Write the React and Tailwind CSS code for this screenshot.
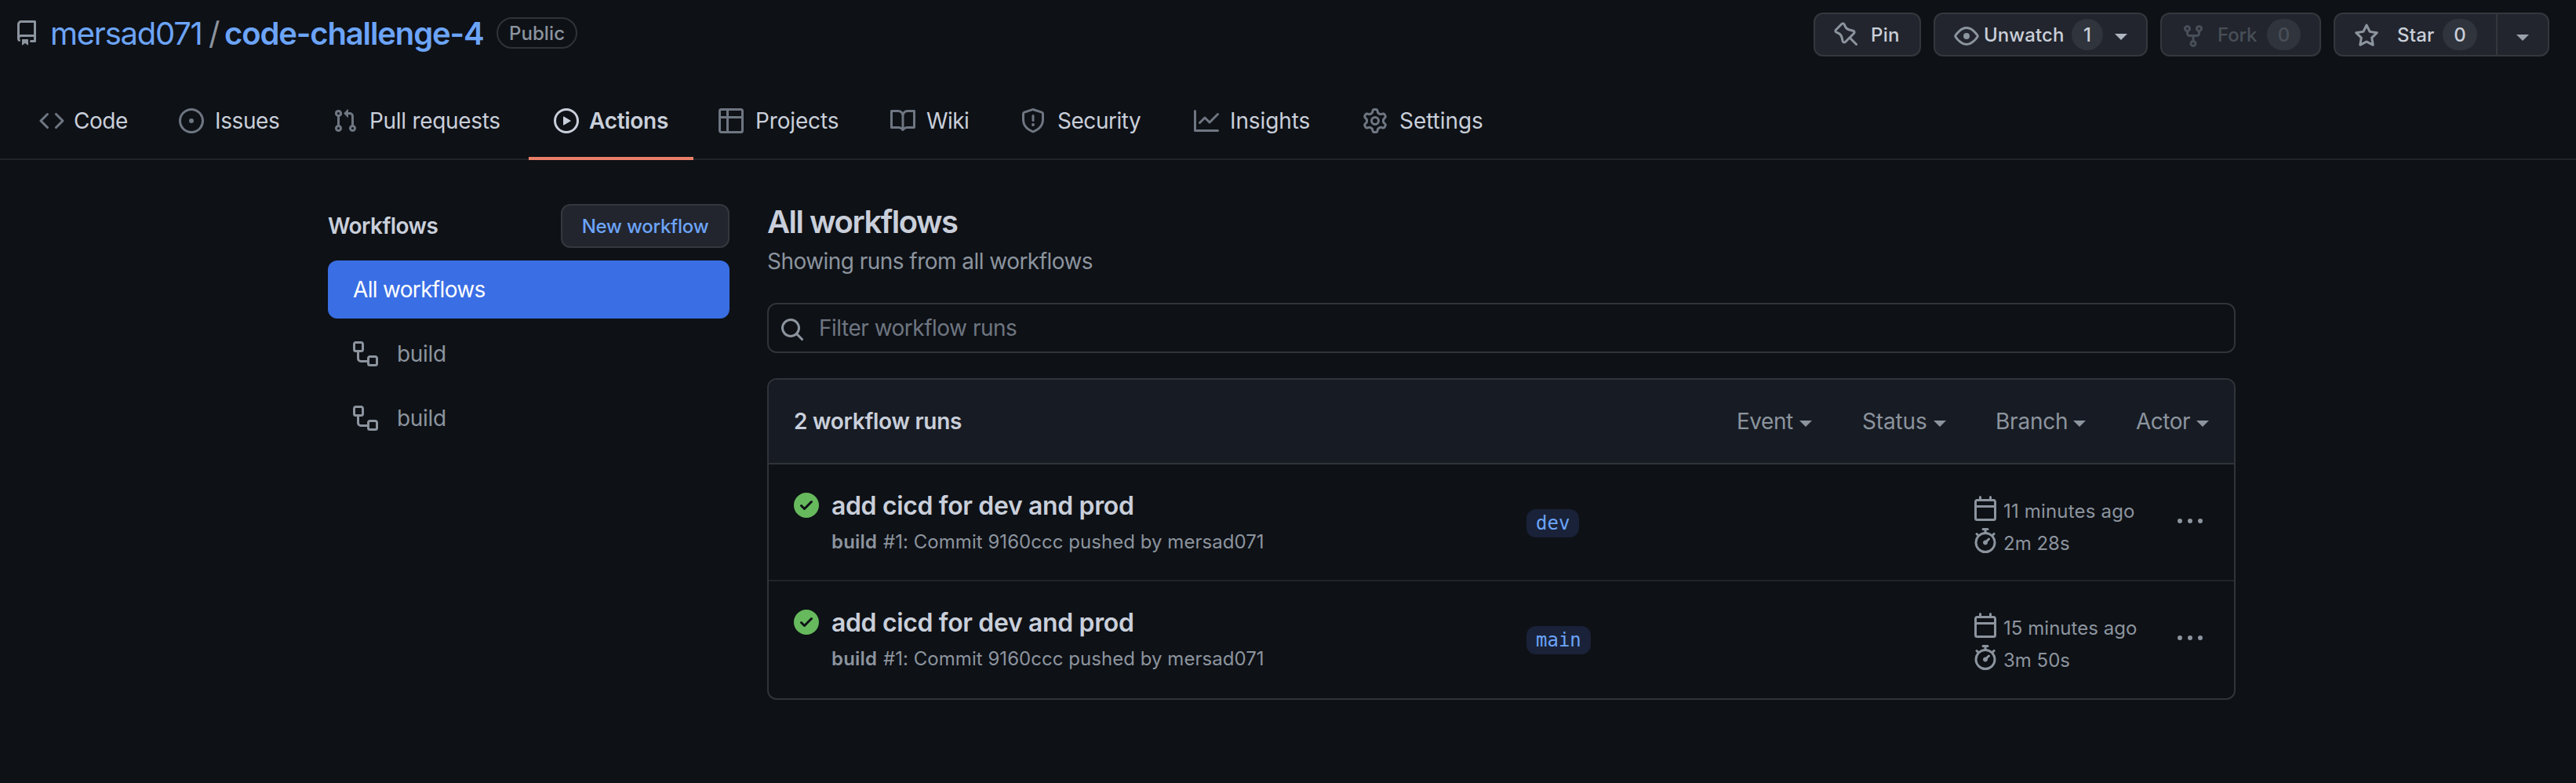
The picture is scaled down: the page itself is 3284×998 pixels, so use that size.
import React from "react";

const ICONS = {
  repo: "M2 2.5A2.5 2.5 0 014.5 0h8.75a.75.75 0 01.75.75v12.5a.75.75 0 01-.75.75h-2.5a.75.75 0 110-1.5h1.75v-2h-8a1 1 0 00-.714 1.7.75.75 0 01-1.072 1.05A2.495 2.495 0 012 11.5v-9zm10.5-1V9h-8c-.356 0-.694.074-1 .208V2.5a1 1 0 011-1h8zM5 12.25v3.25a.25.25 0 00.4.2l1.45-1.087a.25.25 0 01.3 0L8.6 15.7a.25.25 0 00.4-.2v-3.25a.25.25 0 00-.25-.25h-3.5a.25.25 0 00-.25.25z",
  code: "M4.72 3.22a.75.75 0 011.06 1.06L2.06 8l3.72 3.72a.75.75 0 11-1.06 1.06L.47 8.53a.75.75 0 010-1.06l4.25-4.25zm6.56 0a.75.75 0 10-1.06 1.06L13.94 8l-3.72 3.72a.75.75 0 101.06 1.06l4.25-4.25a.75.75 0 000-1.06l-4.25-4.25z",
  issue: "M8 9.5a1.5 1.5 0 100-3 1.5 1.5 0 000 3zM8 0a8 8 0 100 16A8 8 0 008 0zM1.5 8a6.5 6.5 0 1113 0 6.5 6.5 0 01-13 0z",
  pull: "M7.177 3.073L9.573.677A.25.25 0 0110 .854v4.792a.25.25 0 01-.427.177L7.177 3.427a.25.25 0 010-.354zM3.75 2.5a.75.75 0 100 1.5.75.75 0 000-1.5zm-2.25.75a2.25 2.25 0 113 2.122v5.256a2.251 2.251 0 11-1.5 0V5.372A2.25 2.25 0 011.5 3.25zM11 2.5h-1V4h1a1 1 0 011 1v5.628a2.251 2.251 0 101.5 0V5A2.5 2.5 0 0011 2.5zm1 10.25a.75.75 0 111.5 0 .75.75 0 01-1.5 0zM3.75 12a.75.75 0 100 1.5.75.75 0 000-1.5z",
  play: "M1.5 8a6.5 6.5 0 1113 0 6.5 6.5 0 01-13 0zM8 0a8 8 0 100 16A8 8 0 008 0zM6.379 5.227A.25.25 0 006 5.442v5.117a.25.25 0 00.379.214l4.264-2.559a.25.25 0 000-.428L6.379 5.227z",
  table: "M1.75 0A1.75 1.75 0 000 1.75v12.5C0 15.216.784 16 1.75 16h12.5A1.75 1.75 0 0016 14.25V1.75A1.75 1.75 0 0014.25 0H1.75zM1.5 1.75a.25.25 0 01.25-.25H5V5H1.5V1.75zM6.5 1.5V5h8V1.75a.25.25 0 00-.25-.25H6.5zm8 5h-8v8h7.75a.25.25 0 00.25-.25V6.5zM5 14.5v-8H1.5v7.75c0 .138.112.25.25.25H5z",
  book: "M0 1.75A.75.75 0 01.75 1h4.253c1.227 0 2.317.59 3 1.501A3.744 3.744 0 0111.006 1h4.245a.75.75 0 01.75.75v10.5a.75.75 0 01-.75.75h-4.507a2.25 2.25 0 00-1.591.659l-.622.621a.75.75 0 01-1.06 0l-.622-.621A2.25 2.25 0 005.258 13H.75a.75.75 0 01-.75-.75V1.75zm8.755 3a2.25 2.25 0 012.25-2.25H14.5v9h-3.757c-.71 0-1.4.201-1.992.572l.004-7.322zm-1.504 7.324l.004-5.073-.002-2.253A2.25 2.25 0 005.003 2.5H1.5v9h3.757a3.75 3.75 0 011.994.574z",
  shield: "M7.467.133a1.75 1.75 0 011.066 0l5.25 1.68A1.75 1.75 0 0115 3.48V7c0 1.566-.32 3.182-1.303 4.682-.983 1.498-2.585 2.813-5.032 3.855a1.7 1.7 0 01-1.33 0c-2.447-1.042-4.049-2.357-5.032-3.855C1.32 10.182 1 8.566 1 7V3.48a1.75 1.75 0 011.217-1.667l5.25-1.68zm.61 1.429a.25.25 0 00-.153 0l-5.25 1.68a.25.25 0 00-.174.238V7c0 1.358.275 2.666 1.057 3.86.784 1.194 2.121 2.34 4.366 3.297a.2.2 0 00.154 0c2.245-.956 3.582-2.104 4.366-3.298C13.225 9.666 13.5 8.36 13.5 7V3.48a.25.25 0 00-.174-.237l-5.25-1.68zM8.75 4.75a.75.75 0 00-1.5 0v3a.75.75 0 001.5 0v-3zM9 10.5a1 1 0 11-2 0 1 1 0 012 0z",
  graph: "M1.5 1.75a.75.75 0 00-1.5 0v12.5c0 .414.336.75.75.75h14.5a.75.75 0 000-1.5H1.5V1.75zm14.28 2.53a.75.75 0 00-1.06-1.06L10 7.94 7.53 5.47a.75.75 0 00-1.06 0L3.22 8.72a.75.75 0 001.06 1.06L7 7.06l2.47 2.47a.75.75 0 001.06 0l5.25-5.25z",
  gear: "M7.429 1.525a6.593 6.593 0 011.142 0c.036.003.108.036.137.146l.289 1.105c.147.56.55.967.997 1.189.174.086.341.183.501.29.417.278.97.423 1.53.27l1.102-.303c.11-.03.175.016.195.046.219.31.41.641.573.989.014.031.022.11-.059.19l-.815.806c-.411.406-.562.957-.53 1.456a4.588 4.588 0 010 .582c-.032.499.119 1.05.53 1.456l.815.806c.08.08.073.159.059.19a6.494 6.494 0 01-.573.99c-.02.029-.086.074-.195.045l-1.103-.303c-.559-.153-1.112-.008-1.529.27-.16.107-.327.204-.5.29-.449.222-.851.628-.998 1.189l-.289 1.105c-.029.11-.101.143-.137.146a6.613 6.613 0 01-1.142 0c-.036-.003-.108-.037-.137-.146l-.289-1.105c-.147-.56-.55-.967-.997-1.189a4.502 4.502 0 01-.501-.29c-.417-.278-.97-.423-1.53-.27l-1.102.303c-.11.03-.175-.016-.195-.046a6.492 6.492 0 01-.573-.989c-.014-.031-.022-.11.059-.19l.815-.806c.411-.406.562-.957.53-1.456a4.587 4.587 0 010-.582c.032-.499-.119-1.05-.53-1.456l-.815-.806c-.08-.08-.073-.159-.059-.19a6.44 6.44 0 01.573-.99c.02-.029.086-.075.195-.045l1.103.303c.559.153 1.112.008 1.529-.27.16-.107.327-.204.5-.29.449-.222.851-.628.998-1.189l.289-1.105c.029-.11.101-.143.137-.146zM8 0c-.236 0-.47.01-.701.03-.743.065-1.29.615-1.458 1.261l-.29 1.106c-.017.066-.078.158-.211.224a5.994 5.994 0 00-.668.386c-.123.082-.233.09-.3.071L3.27 2.776c-.644-.177-1.392.02-1.82.63a7.977 7.977 0 00-.704 1.217c-.315.675-.111 1.422.363 1.891l.815.806c.05.048.098.147.088.294a6.084 6.084 0 000 .772c.01.147-.038.246-.088.294l-.815.806c-.474.469-.678 1.216-.363 1.891.2.428.436.835.704 1.218.428.609 1.176.806 1.82.63l1.103-.303c.066-.019.176-.011.299.071.213.143.436.272.668.386.133.066.194.158.212.224l.289 1.106c.169.646.715 1.196 1.458 1.26a8.094 8.094 0 001.402 0c.743-.064 1.29-.614 1.458-1.26l.29-1.106c.017-.066.078-.158.211-.224a5.98 5.98 0 00.668-.386c.123-.082.233-.09.3-.071l1.102.302c.644.177 1.392-.02 1.82-.63.268-.382.505-.789.704-1.217.315-.675.111-1.422-.364-1.891l-.814-.806c-.05-.048-.098-.147-.088-.294a6.1 6.1 0 000-.772c-.01-.147.039-.246.088-.294l.814-.806c.475-.469.679-1.216.364-1.891a7.992 7.992 0 00-.704-1.218c-.428-.609-1.176-.806-1.82-.63l-1.103.303c-.066.019-.176.011-.299-.071a5.991 5.991 0 00-.668-.386c-.133-.066-.194-.158-.212-.224L10.16 1.29C9.99.645 9.444.095 8.701.031A8.094 8.094 0 008 0zm1.5 8a1.5 1.5 0 11-3 0 1.5 1.5 0 013 0zM11 8a3 3 0 11-6 0 3 3 0 016 0z",
  pin: "M4.456.734a1.75 1.75 0 012.826.504l.613 1.327a3.081 3.081 0 002.084 1.707l2.454.584c1.332.317 1.8 1.972.832 2.94L11.06 10l3.72 3.72a.75.75 0 11-1.061 1.06L10 11.06l-2.204 2.205c-.968.968-2.623.5-2.94-.832l-.584-2.454a3.081 3.081 0 00-1.707-2.084l-1.327-.613a1.75 1.75 0 01-.504-2.826L4.456.734zM5.92 1.866a.25.25 0 00-.404-.072L1.794 5.516a.25.25 0 00.072.404l1.328.613A4.582 4.582 0 015.73 9.63l.584 2.454a.25.25 0 00.42.12l5.47-5.47a.25.25 0 00-.12-.42L9.63 5.73a4.581 4.581 0 01-3.098-2.537L5.92 1.866z",
  eye: "M1.679 7.932c.412-.621 1.242-1.75 2.366-2.717C5.175 4.242 6.527 3.5 8 3.5c1.473 0 2.824.742 3.955 1.715 1.124.967 1.954 2.096 2.366 2.717a.119.119 0 010 .136c-.412.621-1.242 1.75-2.366 2.717C10.825 11.758 9.473 12.5 8 12.5c-1.473 0-2.824-.742-3.955-1.715C2.92 9.818 2.09 8.69 1.679 8.068a.119.119 0 010-.136zM8 2c-1.981 0-3.67.992-4.933 2.078C1.797 5.169.88 6.423.43 7.1a1.619 1.619 0 000 1.798c.45.678 1.367 1.932 2.637 3.024C4.329 13.008 6.019 14 8 14c1.981 0 3.67-.992 4.933-2.078 1.27-1.091 2.187-2.345 2.637-3.023a1.619 1.619 0 000-1.798c-.45-.678-1.367-1.932-2.637-3.023C11.671 2.992 9.981 2 8 2zm0 8a2 2 0 100-4 2 2 0 000 4z",
  fork: "M5 3.25a.75.75 0 11-1.5 0 .75.75 0 011.5 0zm0 2.122a2.25 2.25 0 10-1.5 0v.878A2.25 2.25 0 005.75 8.5h1.5v2.128a2.251 2.251 0 101.5 0V8.5h1.5a2.25 2.25 0 002.25-2.25v-.878a2.25 2.25 0 10-1.5 0v.878a.75.75 0 01-.75.75h-4.5A.75.75 0 015 6.25v-.878zm3.75 7.378a.75.75 0 11-1.5 0 .75.75 0 011.5 0zm3-8.75a.75.75 0 100-1.5.75.75 0 000 1.5z",
  star: "M8 .25a.75.75 0 01.673.418l1.882 3.815 4.21.612a.75.75 0 01.416 1.279l-3.046 2.97.719 4.192a.75.75 0 01-1.088.791L8 12.347l-3.766 1.98a.75.75 0 01-1.088-.79l.72-4.194L.818 6.374a.75.75 0 01.416-1.28l4.21-.611L7.327.668A.75.75 0 018 .25zm0 2.445L6.615 5.5a.75.75 0 01-.564.41l-3.097.45 2.24 2.184a.75.75 0 01.216.664l-.528 3.084 2.769-1.456a.75.75 0 01.698 0l2.77 1.456-.53-3.084a.75.75 0 01.216-.664l2.24-2.183-3.096-.45a.75.75 0 01-.564-.41L8 2.694v.001z",
  workflow: "M0 1.75C0 .784.784 0 1.75 0h3.5C6.216 0 7 .784 7 1.75v3.5A1.75 1.75 0 015.25 7H4v4a1 1 0 001 1h4v-1.25C9 9.784 9.784 9 10.75 9h3.5c.966 0 1.75.784 1.75 1.75v3.5A1.75 1.75 0 0114.25 16h-3.5A1.75 1.75 0 019 14.25v-.75H5A2.5 2.5 0 012.5 11V7h-.75A1.75 1.75 0 010 5.25v-3.5zm1.75-.25a.25.25 0 00-.25.25v3.5c0 .138.112.25.25.25h3.5a.25.25 0 00.25-.25v-3.5a.25.25 0 00-.25-.25h-3.5zm9 9a.25.25 0 00-.25.25v3.5c0 .138.112.25.25.25h3.5a.25.25 0 00.25-.25v-3.5a.25.25 0 00-.25-.25h-3.5z",
  search: "M11.5 7a4.499 4.499 0 11-8.998 0A4.499 4.499 0 0111.5 7zm-.82 4.74a6 6 0 111.06-1.06l3.04 3.04a.75.75 0 11-1.06 1.06l-3.04-3.04z",
  check: "M8 16A8 8 0 108 0a8 8 0 000 16zm3.78-9.72a.75.75 0 00-1.06-1.06L6.75 9.19 5.28 7.72a.75.75 0 00-1.06 1.06l2 2a.75.75 0 001.06 0l4.5-4.5z",
  calendar: "M4.75 0a.75.75 0 01.75.75V2h5V.75a.75.75 0 011.5 0V2h1.25c.966 0 1.75.784 1.75 1.75v10.5A1.75 1.75 0 0113.25 16H2.75A1.75 1.75 0 011 14.25V3.75C1 2.784 1.784 2 2.75 2H4V.75A.75.75 0 014.75 0zm0 3.5h8.5a.25.25 0 01.25.25V6h-11V3.75a.25.25 0 01.25-.25h2zm-2.25 4v6.75c0 .138.112.25.25.25h10.5a.25.25 0 00.25-.25V7.5h-11z",
  stopwatch: "M5.75.75A.75.75 0 016.5 0h3a.75.75 0 010 1.5h-.75v1l-.001.041a6.718 6.718 0 013.464 1.435l.007-.006.75-.75a.75.75 0 111.06 1.06l-.75.75-.006.007a6.75 6.75 0 11-10.548 0L2.72 5.03l-.75-.75a.75.75 0 011.06-1.06l.75.75.007.006A6.718 6.718 0 017.25 2.541a.756.756 0 010-.041v-1H6.5a.75.75 0 01-.75-.75zM8 14.5A5.25 5.25 0 108 4a5.25 5.25 0 000 10.5zm.389-6.7l1.33-1.33a.75.75 0 111.061 1.06L9.45 8.861A1.502 1.502 0 018 10.75a1.5 1.5 0 11.389-2.95z",
  kebab: "M0 8a1.5 1.5 0 103 0 1.5 1.5 0 00-3 0zM6.5 8a1.5 1.5 0 103 0 1.5 1.5 0 00-3 0zM13 8a1.5 1.5 0 103 0 1.5 1.5 0 00-3 0z",
};

function Icon({ name, className = "" }) {
  return (
    <svg viewBox="0 0 16 16" fill="currentColor" fillRule="evenodd" className={`size-8 shrink-0 ${className}`}>
      <path d={ICONS[name]} />
    </svg>
  );
}

function Caret({ className = "" }) {
  return (
    <svg viewBox="0 0 16 8" fill="currentColor" className={`h-2 w-4 shrink-0 ${className}`}>
      <path d="M0 0h16L8 8z" />
    </svg>
  );
}

const TABS = [
  { icon: "code", label: "Code", box: "w-[178px] gap-3", text: "tracking-[-0.46px]" },
  { icon: "issue", label: "Issues", box: "w-[196px] gap-[14px]", text: "tracking-[-0.39px]" },
  { icon: "pull", label: "Pull requests", box: "w-[282px] gap-[15px]", text: "tracking-[-0.3px]" },
  { icon: "play", label: "Actions", box: "w-[210px] gap-[13px]", text: "tracking-[-0.28px]", active: true },
  { icon: "table", label: "Projects", box: "w-[219px] gap-[15px]", text: "tracking-[-0.15px]" },
  { icon: "book", label: "Wiki", box: "w-[166px] gap-[14px]", text: "tracking-[-0.58px]" },
  { icon: "shield", label: "Security", box: "w-[221px] gap-[15px]", text: "tracking-[-0.47px]" },
  { icon: "graph", label: "Insights", box: "w-[215px] gap-[14px]", text: "tracking-[-0.1px]" },
  { icon: "gear", label: "Settings", box: "gap-[15px]", text: "tracking-[-0.06px]" },
];

const FILTERS = [
  { label: "Event", box: "w-[161px] gap-[8px]", text: "pl-px tracking-[-0.47px]" },
  { label: "Status", box: "w-[169px] gap-[8px]", text: "tracking-[-0.14px]" },
  { label: "Branch", box: "w-[180px] gap-[7px]", text: "pl-px tracking-[-0.22px]" },
  { label: "Actor", box: "gap-2", text: "tracking-[-0.5px]" },
];

const RUNS = [
  { branch: "dev", when: "11 minutes ago", whenText: "tracking-[0.18px]", took: "2m 28s" },
  { branch: "main", when: "15 minutes ago", whenText: "tracking-[0.04px]", took: "3m 50s" },
];

const BUTTON = "flex h-14 items-center rounded-xl border-2 border-[#34383d] bg-[#22252d] text-2xl font-medium text-[#c9cfda]";
const COUNTER = "flex h-10 items-center justify-center rounded-full bg-[#30343c] pt-px";

function Header() {
  return (
    <header className="flex h-[84px] items-center pl-[18px] pr-[34px]">
      <Icon name="repo" className="text-[#8c949e]" />
      <div className="ml-[14px] flex pt-0.5 text-[40px] leading-[48px] text-[#6ca4f8]">
        <span className="w-[202px] tracking-[-1.25px]">mersad071</span>
        <span className="w-[20px] text-[#8c949e]">/</span>
        <span className="w-[331px] font-semibold tracking-[-1.13px]">code-challenge-4</span>
      </div>
      <span className="ml-4 flex h-10 w-[103px] items-center justify-center rounded-full border-2 border-[#303439] pt-px text-2xl font-medium tracking-[0.1px] text-[#8c949e]">
        Public
      </span>
      <div className="ml-auto flex gap-4 pt-1">
        <button className={`${BUTTON} w-[137px] pl-6`}>
          <Icon name="pin" className="text-[#8c949e]" />
          <span className="ml-[15px] pt-px tracking-[0.3px]">Pin</span>
        </button>
        <button className={`${BUTTON} w-[273px] pl-6`}>
          <Icon name="eye" className="mt-1 text-[#8c949e]" />
          <span className="ml-[6px] w-[112px] pt-px text-left tracking-[0.08px]">Unwatch</span>
          <span className={`${COUNTER} w-10`}>1</span>
          <Caret className="ml-[15px] mt-[6px] text-[#b0b6c0]" />
        </button>
        <button className={`${BUTTON} w-[205px] pl-6`}>
          <Icon name="fork" className="mt-1 text-[#484f58]" />
          <span className="ml-[15px] w-[63px] pt-px text-left text-[#484f58] tracking-[-0.14px]">Fork</span>
          <span className={`${COUNTER} w-[43px] text-[#484f58]`}>0</span>
        </button>
        <div className={`${BUTTON} w-[275px]`}>
          <button className="flex h-full w-[207px] items-center border-r-2 border-[#34383d] pl-6">
            <Icon name="star" className="mt-1 text-[#8c949e]" />
            <span className="ml-[23px] w-[58px] pt-px text-left tracking-[0.19px]">Star</span>
            <span className={`${COUNTER} w-[44px]`}>0</span>
          </button>
          <button className="flex flex-1 items-center justify-center">
            <Caret className="mt-2 text-[#9aa1ab]" />
          </button>
        </div>
      </div>
    </header>
  );
}

function Tabs() {
  return (
    <nav className="flex h-[120px] items-end border-b-2 border-[#22262b] pl-[18px]">
      {TABS.map((t) => (
        <a
          key={t.label}
          className={`-mb-0.5 flex h-[100px] items-center border-b-4 pl-8 pt-1 text-[28px] text-[#c9cfda] ${t.box} ${
            t.active ? "border-[#ea8069] font-semibold" : "border-transparent"
          }`}
        >
          <Icon name={t.icon} className={t.active ? "text-[#c9cfda]" : "text-[#6e7681]"} />
          <span className={`whitespace-nowrap ${t.text}`}>{t.label}</span>
        </a>
      ))}
    </nav>
  );
}

function Sidebar() {
  return (
    <aside className="w-[512px] pt-2">
      <div className="flex h-14 items-center justify-between">
        <h3 className="text-[28px] font-semibold tracking-[-0.57px] text-[#c9cfda]">Workflows</h3>
        <button className="flex h-14 w-[215px] items-center justify-center rounded-xl border-2 border-[#34383d] bg-[#22252d] pt-px text-2xl font-medium tracking-[-0.22px] text-[#6ca4f8]">
          New workflow
        </button>
      </div>
      <ul className="mt-4 flex flex-col gap-2 text-[28px] text-[#8c949e]">
        <li className="flex h-[74px] items-center rounded-xl bg-[#396ee5] pl-8 tracking-[-0.68px] text-white">All workflows</li>
        {[1, 2].map((n) => (
          <li key={n} className="flex h-[74px] items-center gap-6 pl-8 tracking-[-0.3px]">
            <Icon name="workflow" />
            build
          </li>
        ))}
      </ul>
    </aside>
  );
}

function Run({ run, last }) {
  return (
    <div className={`flex h-[149px] border-b-2 ${last ? "border-transparent" : "border-[#212529]"}`}>
      <div className="flex w-[966px] gap-4 pl-8 pt-7">
        <Icon name="check" className="mt-2 text-[#66b95d]" />
        <div className="whitespace-nowrap pt-px">
          <div className="text-[32px] font-semibold leading-[48px] tracking-[-0.36px] text-[#c9cfda]">add cicd for dev and prod</div>
          <div className="mt-1 flex text-2xl leading-9 text-[#8c949e]">
            <span className="w-[66px] font-semibold tracking-[0.19px]">build</span>
            <span className="tracking-[0.04px]">#1: Commit 9160ccc pushed by mersad071</span>
          </div>
        </div>
      </div>
      <div className="w-[569px] pt-[57px]">
        <span className="inline-flex h-9 items-center rounded-xl bg-[#192238] px-3 font-['DejaVu_Sans_Mono',monospace] text-2xl text-[#6ca4f8]">
          {run.branch}
        </span>
      </div>
      <div className="w-[261px] pt-[37px] text-2xl text-[#8c949e]">
        <div className="flex h-[41px] items-center gap-[7px]">
          <Icon name="calendar" className="-mt-1" />
          <span className={`mt-1 ${run.whenText}`}>{run.when}</span>
        </div>
        <div className="flex h-[41px] items-center gap-[7px]">
          <Icon name="stopwatch" className="-mt-1" />
          <span className="mt-1">{run.took}</span>
        </div>
      </div>
      <div className="pt-14">
        <Icon name="kebab" className="text-[#8c949e]" />
      </div>
    </div>
  );
}

function Runs() {
  return (
    <main className="w-[1872px]">
      <h2 className="h-[60px] pt-px text-[40px] font-semibold leading-[60px] tracking-[-1.5px] text-[#c9cfda]">All workflows</h2>
      <p className="text-[28px] leading-[42px] tracking-[-0.54px] text-[#8c949e]">Showing runs from all workflows</p>
      <div className="mt-8 flex h-16 items-center gap-[18px] rounded-xl border-2 border-[#303439] pl-[14px] text-[28px]">
        <Icon name="search" className="mt-1 text-[#8c949e]" />
        <span className="tracking-[-0.5px] text-[#6e7681]">Filter workflow runs</span>
      </div>
      <section className="mt-8 overflow-hidden rounded-xl border-2 border-[#303439]">
        <div className="flex h-[108px] items-center border-b-2 border-[#303439] bg-[#171b23] pl-8 text-[28px]">
          <span className="font-semibold tracking-[-0.28px] text-[#c9cfda]">2 workflow runs</span>
          <div className="ml-auto flex w-[635px] text-[#8c949e]">
            {FILTERS.map((f) => (
              <span key={f.label} className={`flex items-center ${f.box}`}>
                <span className={f.text}>{f.label}</span>
                <Caret className="mt-[6px]" />
              </span>
            ))}
          </div>
        </div>
        {RUNS.map((r, i) => (
          <Run key={r.branch} run={r} last={i === RUNS.length - 1} />
        ))}
      </section>
    </main>
  );
}

export default function App() {
  return (
    <div className="h-[998px] w-[3284px] overflow-hidden bg-[#0e1116] font-['Inter',sans-serif]">
      <Header />
      <Tabs />
      <div className="flex gap-12 pl-[418px] pt-12">
        <Sidebar />
        <Runs />
      </div>
    </div>
  );
}
